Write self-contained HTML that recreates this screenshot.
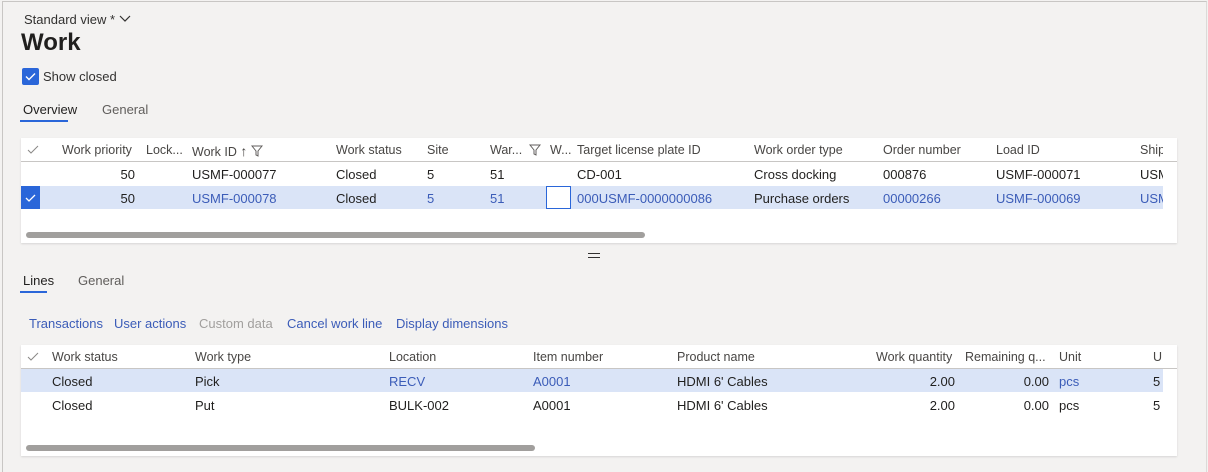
<!DOCTYPE html>
<html><head><style>
body{margin:0;width:1208px;height:464px;background:#f3f2f1;font-family:"Liberation Sans",sans-serif;font-size:13px;color:#201f1e;position:relative;overflow:hidden}
.a{position:absolute;white-space:nowrap}
.frame{position:absolute;left:2px;top:1px;width:1203px;height:470px;border-left:1px solid #c8c6c4;border-top:1px solid #c8c6c4;border-right:1px solid #dcdad8}
.panel{position:absolute;background:#fff;box-shadow:0 1px 2px rgba(0,0,0,.12)}
.h{color:#484644;font-size:12.5px}
.l{color:#3b5cb8}
.sel{position:absolute;background:#dae4f7}
.sb{position:absolute;height:6px;border-radius:3px;background:#a19f9d}
.r{text-align:right}
</style></head><body>
<div class="frame"></div>
<div class="a" style="left:24px;top:12px;font-size:13px;color:#323130">Standard view * <svg width="12" height="8" viewBox="0 0 12 8" style="vertical-align:1px"><path d="M1 1l5 5 5-5" fill="none" stroke="#323130" stroke-width="1.2"/></svg></div>
<div class="a" style="left:21px;top:29px;font-size:24px;font-weight:bold;color:#201f1e">Work</div>
<div class="a" style="left:22px;top:68px;width:17px;height:17px;background:#2a66d9;border-radius:2px"><svg width="17" height="17"><path d="M4 8.5l3 3 6-6" fill="none" stroke="#fff" stroke-width="1.4"/></svg></div>
<div class="a" style="left:43px;top:69px;color:#323130">Show closed</div>
<div class="a" style="left:23px;top:102px">Overview</div>
<div class="a" style="left:20px;top:120px;width:48px;height:2px;background:#2a66d9"></div>
<div class="a" style="left:102px;top:102px;color:#605e5c">General</div>

<div class="panel" style="left:21px;top:138px;width:1156px;height:105px"></div>
<div class="a" style="left:21px;top:161px;width:1156px;height:1px;background:#c8c6c4"></div>
<div class="sel" style="left:21px;top:186px;width:1142px;height:23px"></div>
<div class="a" style="left:21px;top:186px;width:19px;height:23px;background:#2a66d9"><svg width="19" height="23"><path d="M5 12l3 3 6-6" fill="none" stroke="#fff" stroke-width="1.3"/></svg></div>
<div class="a" style="left:546px;top:186px;width:23px;height:21px;border:1px solid #2a66d9;background:#fff"></div>
<svg class="a" style="left:26px;top:144px" width="14" height="12"><path d="M2 6l3 3 7-7" fill="none" stroke="#8a8886" stroke-width="1"/></svg>
<div class="a h" style="left:62px;top:143px">Work priority</div>
<div class="a h" style="left:146px;top:143px">Lock...</div>
<div class="a h" style="left:192px;top:143px">Work ID <span style="font-size:14px">↑</span> <svg width="12" height="12" style="vertical-align:-1px"><path d="M1 1h10L7 6v5L5 10V6z" fill="none" stroke="#605e5c"/></svg></div>
<div class="a h" style="left:336px;top:143px">Work status</div>
<div class="a h" style="left:427px;top:143px">Site</div>
<div class="a h" style="left:490px;top:143px">War...</div>
<svg class="a" style="left:529px;top:144px" width="12" height="12"><path d="M1 1h10L7 6v5L5 10V6z" fill="none" stroke="#605e5c"/></svg>
<div class="a h" style="left:550px;top:143px">W...</div>
<div class="a h" style="left:577px;top:143px">Target license plate ID</div>
<div class="a h" style="left:754px;top:143px">Work order type</div>
<div class="a h" style="left:883px;top:143px">Order number</div>
<div class="a h" style="left:996px;top:143px">Load ID</div>
<div class="a h" style="left:1140px;top:143px;width:23px;overflow:hidden">Ship</div>

<div class="a r" style="left:100px;width:35px;top:167px">50</div>
<div class="a" style="left:192px;top:167px">USMF-000077</div>
<div class="a" style="left:336px;top:167px">Closed</div>
<div class="a" style="left:427px;top:167px">5</div>
<div class="a" style="left:490px;top:167px">51</div>
<div class="a" style="left:577px;top:167px">CD-001</div>
<div class="a" style="left:754px;top:167px">Cross docking</div>
<div class="a" style="left:883px;top:167px">000876</div>
<div class="a" style="left:996px;top:167px">USMF-000071</div>
<div class="a" style="left:1140px;top:167px;width:23px;overflow:hidden">USMF</div>

<div class="a r" style="left:100px;width:35px;top:191px">50</div>
<div class="a l" style="left:192px;top:191px">USMF-000078</div>
<div class="a" style="left:336px;top:191px">Closed</div>
<div class="a l" style="left:427px;top:191px">5</div>
<div class="a l" style="left:490px;top:191px">51</div>
<div class="a l" style="left:577px;top:191px">000USMF-0000000086</div>
<div class="a" style="left:754px;top:191px">Purchase orders</div>
<div class="a l" style="left:883px;top:191px">00000266</div>
<div class="a l" style="left:996px;top:191px">USMF-000069</div>
<div class="a l" style="left:1140px;top:191px;width:23px;overflow:hidden">USMF</div>
<div class="sb" style="left:26px;top:232px;width:619px"></div>

<div class="a" style="left:588px;top:253px;width:12px;height:1px;background:#323130"></div>
<div class="a" style="left:588px;top:257px;width:12px;height:1px;background:#323130"></div>

<div class="a" style="left:23px;top:273px">Lines</div>
<div class="a" style="left:20px;top:291px;width:27px;height:2px;background:#2a66d9"></div>
<div class="a" style="left:78px;top:273px;color:#605e5c">General</div>

<div class="a l" style="left:29px;top:316px">Transactions</div>
<div class="a l" style="left:114px;top:316px">User actions</div>
<div class="a" style="left:199px;top:316px;color:#a19f9d">Custom data</div>
<div class="a l" style="left:287px;top:316px">Cancel work line</div>
<div class="a l" style="left:396px;top:316px">Display dimensions</div>

<div class="panel" style="left:21px;top:345px;width:1156px;height:111px"></div>
<div class="a" style="left:21px;top:368px;width:1156px;height:1px;background:#c8c6c4"></div>
<div class="sel" style="left:21px;top:369px;width:1142px;height:23px"></div>
<svg class="a" style="left:26px;top:351px" width="14" height="12"><path d="M2 6l3 3 7-7" fill="none" stroke="#8a8886" stroke-width="1"/></svg>
<div class="a h" style="left:52px;top:350px">Work status</div>
<div class="a h" style="left:195px;top:350px">Work type</div>
<div class="a h" style="left:389px;top:350px">Location</div>
<div class="a h" style="left:533px;top:350px">Item number</div>
<div class="a h" style="left:677px;top:350px">Product name</div>
<div class="a h" style="left:876px;top:350px">Work quantity</div>
<div class="a h" style="left:965px;top:350px">Remaining q...</div>
<div class="a h" style="left:1059px;top:350px">Unit</div>
<div class="a h" style="left:1153px;top:350px;width:10px;overflow:hidden">U</div>

<div class="a" style="left:52px;top:374px">Closed</div>
<div class="a" style="left:195px;top:374px">Pick</div>
<div class="a l" style="left:389px;top:374px">RECV</div>
<div class="a l" style="left:533px;top:374px">A0001</div>
<div class="a" style="left:677px;top:374px">HDMI 6' Cables</div>
<div class="a r" style="left:900px;width:55px;top:374px">2.00</div>
<div class="a r" style="left:990px;width:59px;top:374px">0.00</div>
<div class="a l" style="left:1059px;top:374px">pcs</div>
<div class="a" style="left:1153px;top:374px;width:10px;overflow:hidden">5</div>

<div class="a" style="left:52px;top:398px">Closed</div>
<div class="a" style="left:195px;top:398px">Put</div>
<div class="a" style="left:389px;top:398px">BULK-002</div>
<div class="a" style="left:533px;top:398px">A0001</div>
<div class="a" style="left:677px;top:398px">HDMI 6' Cables</div>
<div class="a r" style="left:900px;width:55px;top:398px">2.00</div>
<div class="a r" style="left:990px;width:59px;top:398px">0.00</div>
<div class="a" style="left:1059px;top:398px">pcs</div>
<div class="a" style="left:1153px;top:398px;width:10px;overflow:hidden">5</div>
<div class="sb" style="left:26px;top:445px;width:509px"></div>
</body></html>
